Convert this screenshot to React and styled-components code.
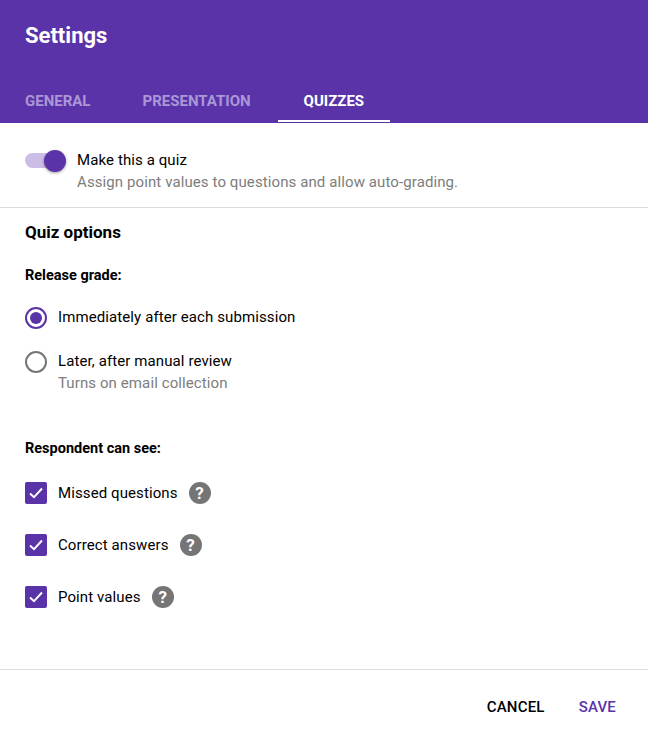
import React from 'react'
import styled, { createGlobalStyle } from 'styled-components'

const purple = '#5a33a9'

const Global = createGlobalStyle`
html, body { margin: 0; padding: 0; background: #fff; }
body { font-family: Roboto, "Liberation Sans", sans-serif; color: #000; -webkit-font-smoothing: antialiased; }
`

const Dialog = styled.div`
width: 648px;
height: 742px;
display: flex;
flex-direction: column;
background: #fff;
overflow: hidden;
`
const Header = styled.header`
height: 123px;
flex: none;
background: ${purple};
display: flex;
flex-direction: column;
justify-content: space-between;
padding-left: 25px;
box-sizing: border-box;
`
const Title = styled.h1`
margin: 0;
padding-top: 22px;
font-size: 22px;
line-height: 28px;
font-weight: 700;
color: #fff;
`
const Tabs = styled.nav`
display: flex;
`
const Tab = styled.div`
font-size: 15px;
font-weight: 700;
line-height: 20px;
height: 38px;
box-sizing: border-box;
padding-top: 7px;
margin-left: ${p => p.$ml}px;
padding-left: ${p => p.$pad}px;
padding-right: ${p => p.$pad}px;
color: ${p => (p.$active ? '#fff' : '#ab97d6')};
border-bottom: 2px solid ${p => (p.$active ? '#fff' : 'transparent')};
margin-bottom: 1px;
`
const QuizRow = styled.section`
height: 85px;
flex: none;
box-sizing: border-box;
border-bottom: 1px solid #dcdcdc;
display: flex;
padding: 27px 0 0 25px;
`
const Switch = styled.div`
position: relative;
width: 36px;
height: 15px;
margin-top: 3px;
margin-right: 16px;
border-radius: 8px;
background: #cbbde6;
`
const Knob = styled.span`
position: absolute;
right: -5px;
top: -3px;
width: 22px;
height: 22px;
border-radius: 50%;
background: ${purple};
box-shadow: 0 1px 3px rgba(0, 0, 0, 0.4);
`
const Label = styled.div`
font-size: 15px;
line-height: 20px;
letter-spacing: 0.1px;
color: #000;
`
const Hint = styled.div`
font-size: 15px;
line-height: 20px;
letter-spacing: 0.1px;
margin-top: 2px;
color: #7d7d7d;
`
const Content = styled.main`
flex: 1;
padding: 13px 25px 0;
`
const SectionTitle = styled.h2`
margin: 0;
font-size: 17px;
line-height: 22px;
font-weight: 700;
`
const GroupTitle = styled.h3`
margin: ${p => p.$mt}px 0 0;
font-size: 14.5px;
line-height: 20px;
font-weight: 700;
`
const Radios = styled.div`
display: flex;
flex-direction: column;
gap: 22px;
margin-top: 21px;
`
const Option = styled.div`
display: flex;
align-items: flex-start;
gap: 11px;
`
const Radio = styled.span`
flex: none;
width: 22px;
height: 22px;
box-sizing: border-box;
border-radius: 50%;
border: 2px solid ${p => (p.$on ? purple : '#757575')};
display: flex;
align-items: center;
justify-content: center;
&::after {
  content: '';
  width: 12px;
  height: 12px;
  border-radius: 50%;
  background: ${p => (p.$on ? purple : 'transparent')};
}
`
const Checks = styled.div`
display: flex;
flex-direction: column;
gap: 30px;
margin-top: 23px;
`
const CheckRow = styled.div`
display: flex;
align-items: center;
height: 22px;
gap: 11px;
`
const Box = styled.span`
flex: none;
width: 22px;
height: 22px;
border-radius: 2px;
background: ${purple};
display: flex;
align-items: center;
justify-content: center;
`
const Help = styled.span`
flex: none;
width: 22px;
height: 22px;
border-radius: 50%;
background: #757575;
color: #fff;
font-size: 17px;
font-weight: 700;
line-height: 22px;
text-align: center;
`
const Footer = styled.footer`
height: 73px;
flex: none;
box-sizing: border-box;
border-top: 1px solid #dcdcdc;
display: flex;
justify-content: flex-end;
gap: 34px;
padding: 27px 32px 0 0;
`
const Action = styled.div`
font-size: 15px;
line-height: 20px;
font-weight: 500;
letter-spacing: 0.2px;
color: ${p => (p.$primary ? purple : '#000')};
`

function Check() {
  return (
    <Box>
      <svg width="16" height="14" viewBox="0 0 16 14" fill="none">
        <path d="M2 7.5 L6 11.2 L14 2.5" stroke="#fff" strokeWidth="1.9" />
      </svg>
    </Box>
  )
}

const checks = ['Missed questions', 'Correct answers', 'Point values']

export default function App() {
  return (
    <Dialog>
      <Global />
      <Header>
        <Title>Settings</Title>
        <Tabs>
          <Tab $ml={0} $pad={0}>GENERAL</Tab>
          <Tab $ml={52} $pad={0}>PRESENTATION</Tab>
          <Tab $ml={27} $pad={26} $active>QUIZZES</Tab>
        </Tabs>
      </Header>
      <QuizRow>
        <Switch><Knob /></Switch>
        <div>
          <Label>Make this a quiz</Label>
          <Hint>Assign point values to questions and allow auto-grading.</Hint>
        </div>
      </QuizRow>
      <Content>
        <SectionTitle>Quiz options</SectionTitle>
        <GroupTitle $mt={23}>Release grade:</GroupTitle>
        <Radios>
          <Option>
            <Radio $on />
            <Label>Immediately after each submission</Label>
          </Option>
          <Option>
            <Radio />
            <div>
              <Label>Later, after manual review</Label>
              <Hint>Turns on email collection</Hint>
            </div>
          </Option>
        </Radios>
        <GroupTitle $mt={46}>Respondent can see:</GroupTitle>
        <Checks>
          {checks.map(c => (
            <CheckRow key={c}>
              <Check />
              <Label>{c}</Label>
              <Help>?</Help>
            </CheckRow>
          ))}
        </Checks>
      </Content>
      <Footer>
        <Action>CANCEL</Action>
        <Action $primary>SAVE</Action>
      </Footer>
    </Dialog>
  )
}
